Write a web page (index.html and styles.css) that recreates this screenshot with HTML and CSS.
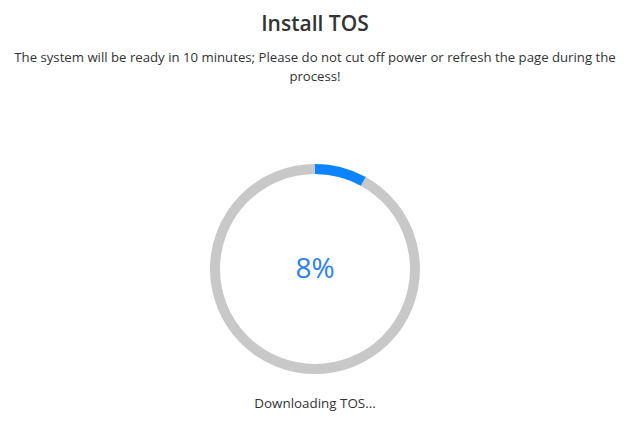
FILE: index.html
```html
<!doctype html>
<html lang="en">
<head>
<title>Install TOS</title>
<link rel="stylesheet" href="styles.css">
</head>
<body>
    <div class="install">
        <h1>Install TOS</h1>
        <p class="notice">The system will be ready in 10 minutes; Please do not cut off power or refresh the page during the process!</p>
        <div class="progress">
            <svg width="210" height="210" viewBox="0 0 210 210">
                <circle class="track" cx="105" cy="105" r="100" />
                <circle class="bar" cx="105" cy="105" r="100" style="stroke-dasharray: 50.27 628.32" transform="rotate(-90 105 105)" />
            </svg>
            <div class="percent">8%</div>
        </div>
        <div class="status">Downloading TOS...</div>
    </div>
</body>
</html>
```

FILE: styles.css
```css
BODY {
    margin: 0;
    padding: 0;
    font: 13px "Open Sans", "Noto Sans", Arial, sans-serif;
    color: #333;
    background: #fff;
}
.install {
    display: flex;
    flex-direction: column;
    align-items: center;
    text-align: center;
    padding: 8px 13px 0 8px;
}
H1 {
    margin: 0;
    font-size: 21px;
    font-weight: 600;
    line-height: 30px;
    color: #333;
}
.notice {
    margin: 10px 0 0 0;
    line-height: 19px;
    font-size: 13.2px;
}
.progress {
    position: relative;
    width: 210px;
    height: 210px;
    margin-top: 78px;
}
.progress svg {
    display: block;
}
.track, .bar {
    fill: none;
    stroke-width: 10;
}
.track {
    stroke: #c8c8c8;
}
.bar {
    stroke: #0a84ff;
}
.percent {
    position: absolute;
    left: 0;
    right: 0;
    top: 50%;
    transform: translateY(-54%);
    font-size: 28px;
    font-weight: 400;
    color: #2680f2;
}
.status {
    margin-top: 20px;
    font-size: 13.4px;
}
```
